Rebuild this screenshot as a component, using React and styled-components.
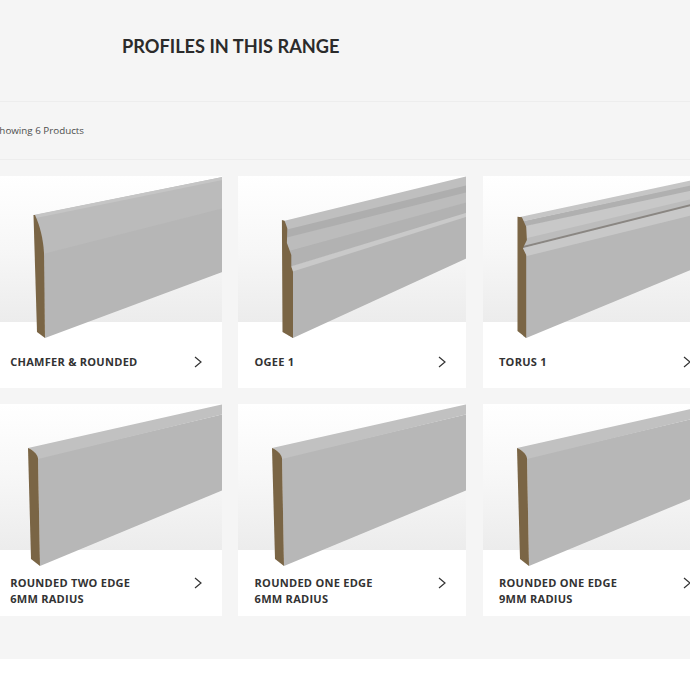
import React from 'react'
import styled, { createGlobalStyle } from 'styled-components'

const GlobalStyle = createGlobalStyle`
  html, body {
    margin: 0;
    padding: 0;
    background: #ffffff;
    overflow: hidden;
  }
`

const Page = styled.div`
  width: 690px;
  height: 690px;
  overflow: hidden;
`

const Section = styled.section`
  background: #f5f5f5;
  height: 659px;
`

const Header = styled.header`
  height: 102px;
  box-sizing: border-box;
  padding: 35px 0 0 122px;
  border-bottom: 1px solid #ededed;
`

const Heading = styled.h2`
  margin: 0;
  font-family: "Lato", "Liberation Sans", sans-serif;
  font-size: 18.2px;
  line-height: 22px;
  font-weight: 700;
  color: #2b2b2b;
`

const ResultBar = styled.div`
  height: 57px;
  margin-left: -6px;
  display: flex;
  align-items: center;
  font-family: "Open Sans", "Liberation Sans", sans-serif;
  font-size: 9.8px;
  color: #4d4d4d;
`

const Rule = styled.div`
  height: 1px;
  background: #ededed;
`

const Grid = styled.div`
  display: grid;
  grid-template-columns: repeat(3, 228px);
  column-gap: 16.4px;
  row-gap: 16px;
  margin-left: -6px;
  padding-top: 16px;
`

const Card = styled.article`
  position: relative;
  height: 212px;
  background: #ffffff;
`

const Picture = styled.div`
  height: 146px;
  background: linear-gradient(180deg, #ffffff 0%, #f7f7f7 50%, #ececec 100%);
`

const Board = styled.svg`
  position: absolute;
  left: 0;
  top: 0;
`

const Footer = styled.div`
  display: flex;
  justify-content: space-between;
  align-items: flex-start;
  padding: ${props => (props.$lines === 2 ? '25px' : '32px')} 0 0 16.2px;
`

const Title = styled.h3`
  margin: 0;
  font-family: "Open Sans", "Liberation Sans", sans-serif;
  font-size: 11.05px;
  line-height: 16px;
  font-weight: 700;
  letter-spacing: 0.25px;
  color: #333333;
`

const Arrow = styled.svg`
  flex: none;
  margin: 2px 20px 0 0;
`

const WOOD = '#7a6545'

// each stripe of a board is a polygon running out past the right edge of the card
const boards = {
  chamfer: [
    { fill: '#b6b6b6', d: 'M49 77L234 30V94L51 162Z' },
    { fill: '#bbbbbb', d: 'M41 39L234 0V31L49 78Z' },
    { fill: '#c5c5c5', d: 'M39.5 39L234 0V3L42 42Z' },
    { fill: WOOD, d: 'M39.5 39L41 39C46 50 49 62 50 77L51 162L43 156Z' },
  ],
  ogee: [
    { fill: '#b5b5b5', d: 'M50 96L234 38V80L55 162L50 159Z' },
    { fill: '#c9c9c9', d: 'M50 91L234 34V39L50 97Z' },
    { fill: '#b2b2b2', d: 'M48 75L234 24V35L48 92Z' },
    { fill: '#bcbcbc', d: 'M47 61L234 14V25L47 76Z' },
    { fill: '#aeaeae', d: 'M47 53L234 7V15L47 62Z' },
    { fill: '#bfbfbf', d: 'M46.6 44.7L234 -1V8L47 54Z' },
    { fill: WOOD, d: 'M43.9 44L46.6 44.7L49.3 52.3L48.9 67L53.3 79L53.3 90.7L55 95.7L55 162L44.5 156Z' },
  ],
  torus: [
    { fill: '#b7b7b7', d: 'M40 80L234 32V83L43.2 162L40 160Z' },
    { fill: '#c8c8c8', d: 'M40 72L234 22V33L40 81Z' },
    { fill: '#bcbcbc', d: 'M40 62L234 16V23L40 72Z' },
    { fill: '#c8c8c8', d: 'M40 50L234 8V17L40 63Z' },
    { fill: '#b0b0b0', d: 'M38 45.5L234 3V9L38 51Z' },
    { fill: '#c6c6c6', d: 'M37 41L234 -1V4L37 46Z' },
    { fill: '#8a8682', d: 'M40 70L234 21.5V23.5L40 72Z' },
    { fill: WOOD, d: 'M34.5 40.7L38.9 41.3L43.2 50.7L43.9 64L39.9 72.3L43.2 79L43.2 162L34.5 155Z' },
  ],
  rounded: [
    { fill: '#b7b7b7', d: 'M44 54L234 9V84L46 162Z' },
    { fill: '#c1c1c1', d: 'M34 44L234 -1V9L44 55C43 50 39 46 34 44Z' },
    { fill: WOOD, d: 'M34 44C39 46 43 50 44 54L46 162L37 155Z' },
  ],
}

function Skirting({ kind }) {
  return (
    <Board width="228" height="170" viewBox="0 0 228 170" aria-hidden="true">
      <defs>
        <filter id="soft" x="-5%" y="-5%" width="110%" height="110%">
          <feGaussianBlur stdDeviation="0.7" />
        </filter>
      </defs>
      <g filter="url(#soft)">
        {boards[kind].map(part => (
          <path key={part.d} d={part.d} fill={part.fill} />
        ))}
      </g>
    </Board>
  )
}

const products = [
  { kind: 'chamfer', lines: ['CHAMFER & ROUNDED'] },
  { kind: 'ogee', lines: ['OGEE 1'] },
  { kind: 'torus', lines: ['TORUS 1'] },
  { kind: 'rounded', lines: ['ROUNDED TWO EDGE', '6MM RADIUS'] },
  { kind: 'rounded', lines: ['ROUNDED ONE EDGE', '6MM RADIUS'] },
  { kind: 'rounded', lines: ['ROUNDED ONE EDGE', '9MM RADIUS'] },
]

function ProductCard({ kind, lines }) {
  return (
    <Card>
      <Picture />
      <Skirting kind={kind} />
      <Footer $lines={lines.length}>
        <Title>
          {lines.map((line, i) => (
            <React.Fragment key={line}>
              {i > 0 && <br />}
              {line}
            </React.Fragment>
          ))}
        </Title>
        <Arrow width="8" height="12" viewBox="0 0 8 12" fill="none" aria-hidden="true">
          <path d="M1 1L7 6L1 11" stroke="#333333" strokeWidth="1.2" />
        </Arrow>
      </Footer>
    </Card>
  )
}

export default function App() {
  return (
    <Page>
      <GlobalStyle />
      <Section>
        <Header>
          <Heading>PROFILES IN THIS RANGE</Heading>
        </Header>
        <ResultBar>Showing 6 Products</ResultBar>
        <Rule />
        <Grid>
          {products.map(product => (
            <ProductCard key={product.lines.join(' ')} {...product} />
          ))}
        </Grid>
      </Section>
    </Page>
  )
}
